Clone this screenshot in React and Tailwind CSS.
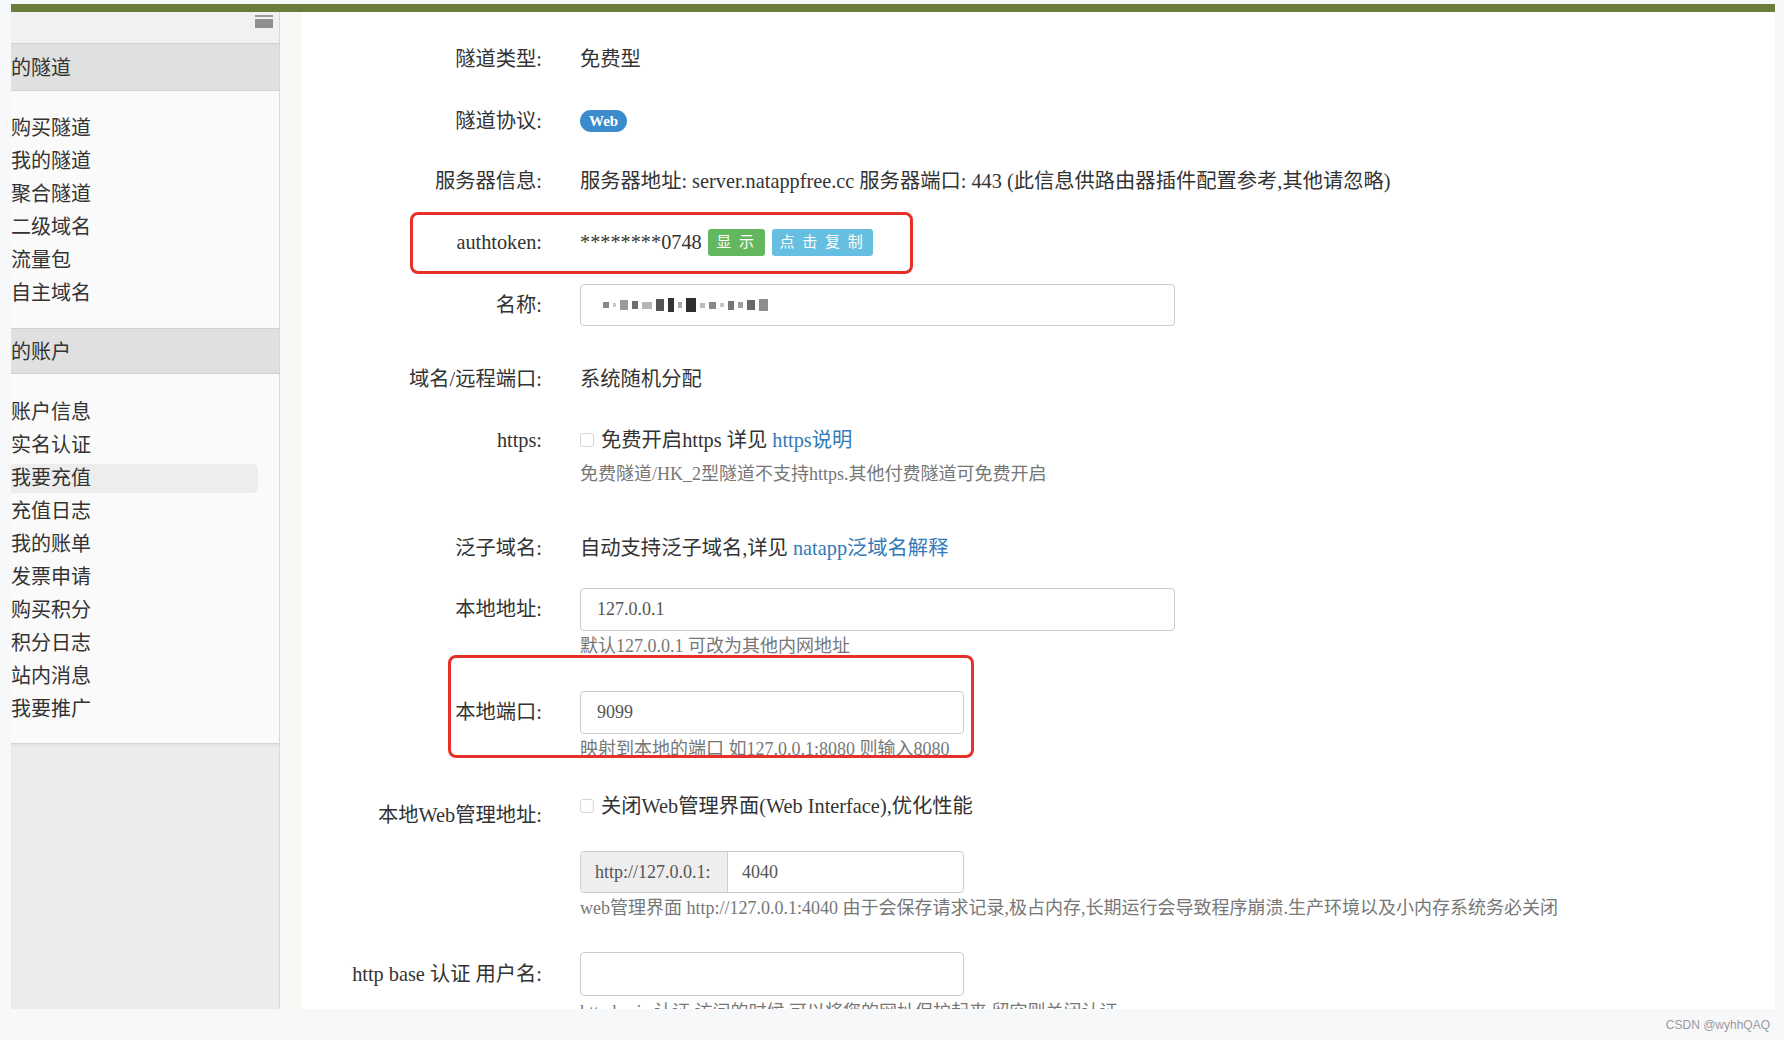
import React from "react";

const tunnelMenu = ["购买隧道", "我的隧道", "聚合隧道", "二级域名", "流量包", "自主域名"];
const accountMenu = ["账户信息", "实名认证", "我要充值", "充值日志", "我的账单", "发票申请", "购买积分", "积分日志", "站内消息", "我要推广"];

// pixelated (censored) tunnel name
const mosaic = [
  [6, 6, "#8a8a8a"], [3, 4, "#c8c8c8"], [8, 10, "#9a9a9a"], [6, 8, "#6e6e6e"], [10, 7, "#b5b5b5"],
  [8, 12, "#555"], [6, 14, "#333"], [4, 6, "#aaa"], [10, 14, "#2f2f2f"], [5, 5, "#bdbdbd"],
  [7, 7, "#888"], [4, 4, "#c4c4c4"], [6, 9, "#777"], [5, 6, "#a0a0a0"], [8, 10, "#6a6a6a"], [9, 12, "#8e8e8e"],
];

const Row = ({ label, labelClass = "h-[44px] leading-[44px]", className = "", children }) => (
  <div className={`flex items-start ${className}`}>
    <div className={`w-[240px] shrink-0 text-right ${labelClass}`}>{label}</div>
    <div className="ml-[38px] flex flex-col">{children}</div>
  </div>
);

const Help = ({ children, className = "mt-[3px]" }) => (
  <div className={`h-[24px] leading-[24px] text-[18px] text-[#777] whitespace-nowrap ${className}`}>{children}</div>
);

const Checkbox = () => (
  <span className="w-[14px] h-[14px] border border-[#d4d4d4] rounded-[3px] bg-white mr-[7px] shrink-0" />
);

export default function App() {
  return (
    <div className="w-[1784px] h-[1040px] bg-[#f7f8fa] overflow-hidden text-[#333] font-['Liberation_Serif','Noto_Sans_CJK_SC',serif]">
      <div className="h-[1009px] pt-[4px] pl-[11px] pr-[9px] flex flex-col">
        <div className="h-[8px] bg-[#6b7b3b] shrink-0" />

        <div className="flex flex-1 min-h-0">
          {/* ── Sidebar ── */}
          <aside className="w-[268px] bg-[#fafafa] flex flex-col text-[20px]">
            <div className="h-[31px] bg-[#f1f1f1] flex justify-end pt-[3px] pr-[6px]">
              <div className="w-[18px] h-[13px] flex flex-col gap-[2px]">
                <div className="h-[2px] bg-[#9b9b9b]" />
                <div className="flex-1 bg-[#8f8f8f]" />
              </div>
            </div>
            <div className="h-[48px] bg-[#e0e0e0] border-y border-[#d0d0d0] flex items-center pt-[2px]">的隧道</div>
            <ul className="pt-[21px] pb-[18px]">
              {tunnelMenu.map(item => (
                <li key={item} className="h-[33px] leading-[33px]">{item}</li>
              ))}
            </ul>
            <div className="h-[46px] bg-[#e0e0e0] border-y border-[#d0d0d0] flex items-center pt-[2px]">的账户</div>
            <ul className="pt-[22px] pb-[17px]">
              {accountMenu.map(item => (
                <li
                  key={item}
                  className={item === "我要充值"
                    ? "h-[29px] leading-[29px] my-[2px] mr-[21px] bg-[#ededed] rounded-r-[6px]"
                    : "h-[33px] leading-[33px]"}
                >
                  {item}
                </li>
              ))}
            </ul>
            <div className="flex-1 bg-[#ececec] border-t border-[#d4d4d4] shadow-[inset_0_2px_2px_rgba(0,0,0,0.04)]" />
          </aside>

          <div className="w-[23px] bg-[#f8f7f3] border-l border-[#d8d8d8]" />

          {/* ── Tunnel form ── */}
          <main className="flex-1 bg-white relative overflow-hidden text-[20.3px]">
            <Row label="隧道类型:" className="mt-[25px]">
              <div className="h-[44px] flex items-center">免费型</div>
            </Row>

            <Row label="隧道协议:" className="mt-[18px]">
              <div className="h-[44px] flex items-center">
                <span className="h-[22px] px-[9px] rounded-full bg-[#3b8bcd] text-white text-[15px] font-bold flex items-center">Web</span>
              </div>
            </Row>

            <Row label="服务器信息:" className="mt-[16px]">
              <div className="h-[44px] flex items-center whitespace-nowrap">
                服务器地址: server.natappfree.cc 服务器端口: 443 (此信息供路由器插件配置参考,其他请忽略)
              </div>
            </Row>

            <Row label="authtoken:" className="mt-[17px]">
              <div className="h-[44px] flex items-center">
                <span>********0748</span>
                <button className="ml-[6px] h-[27px] w-[57px] bg-[#62b75f] text-white text-[15px] tracking-[2px] rounded-[3px]">显 示</button>
                <button className="ml-[7px] h-[27px] w-[101px] bg-[#66bfe0] text-white text-[15px] tracking-[2px] rounded-[3px]">点 击 复 制</button>
              </div>
            </Row>

            <Row label="名称:" labelClass="h-[42px] leading-[42px]" className="mt-[20px]">
              <div className="w-[595px] h-[42px] border border-[#cccccc] rounded-[4px] flex items-center pl-[22px] gap-[4px]">
                {mosaic.map(([w, h, c], i) => (
                  <span key={i} style={{ width: w, height: h, background: c }} />
                ))}
              </div>
            </Row>

            <Row label="域名/远程端口:" className="mt-[31px]">
              <div className="h-[44px] flex items-center">系统随机分配</div>
            </Row>

            <Row label="https:" className="mt-[17px]">
              <div className="h-[44px] flex items-center whitespace-nowrap">
                <Checkbox />
                免费开启https 详见&nbsp;<a className="text-[#337ab7]">https说明</a>
              </div>
              <Help className="">免费隧道/HK_2型隧道不支持https.其他付费隧道可免费开启</Help>
            </Row>

            <Row label="泛子域名:" className="mt-[40px]">
              <div className="h-[44px] flex items-center whitespace-nowrap">
                自动支持泛子域名,详见&nbsp;<a className="text-[#337ab7]">natapp泛域名解释</a>
              </div>
            </Row>

            <Row label="本地地址:" labelClass="h-[43px] leading-[43px]" className="mt-[18px]">
              <div className="w-[595px] h-[43px] border border-[#cccccc] rounded-[4px] flex items-center pl-[16px] text-[18px] text-[#555]">127.0.0.1</div>
              <Help>默认127.0.0.1 可改为其他内网地址</Help>
            </Row>

            <Row label="本地端口:" labelClass="h-[43px] leading-[43px]" className="mt-[33px]">
              <div className="w-[384px] h-[43px] border border-[#cccccc] rounded-[4px] flex items-center pl-[16px] text-[18px] text-[#555]">9099</div>
              <Help>映射到本地的端口 如127.0.0.1:8080 则输入8080</Help>
            </Row>

            <Row label="本地Web管理地址:" labelClass="h-[44px] leading-[44px] translate-y-[9px]" className="mt-[23px]">
              <div className="h-[44px] flex items-center whitespace-nowrap">
                <Checkbox />
                关闭Web管理界面(Web Interface),优化性能
              </div>
            </Row>

            <Row label="" labelClass="h-[42px]" className="mt-[23px]">
              <div className="w-[384px] h-[42px] border border-[#cccccc] rounded-[4px] flex text-[18px] text-[#555] overflow-hidden">
                <div className="w-[147px] bg-[#eeeeee] border-r border-[#cccccc] flex items-center pl-[14px]">http://127.0.0.1:</div>
                <div className="flex items-center pl-[14px]">4040</div>
              </div>
              <Help>web管理界面 http://127.0.0.1:4040 由于会保存请求记录,极占内存,长期运行会导致程序崩溃.生产环境以及小内存系统务必关闭</Help>
            </Row>

            <Row label="http base 认证 用户名:" className="mt-[32px]">
              <div className="w-[384px] h-[44px] border border-[#cccccc] rounded-[4px]" />
              <Help className="mt-[4px]">http basic 认证 访问的时候 可以将您的网址保护起来,留空则关闭认证</Help>
            </Row>

            {/* red annotation boxes */}
            <div className="absolute left-[108px] top-[200px] w-[503px] h-[62px] border-[3px] border-[#e8302b] rounded-[8px] pointer-events-none" />
            <div className="absolute left-[146px] top-[643px] w-[526px] h-[103px] border-[3px] border-[#e8302b] rounded-[8px] pointer-events-none" />
          </main>
        </div>
      </div>

      <footer className="h-[31px] flex items-center justify-end pr-[14px] text-[12px] text-[#9a9a9a] font-['Liberation_Sans',sans-serif]">
        CSDN @wyhhQAQ
      </footer>
    </div>
  );
}
